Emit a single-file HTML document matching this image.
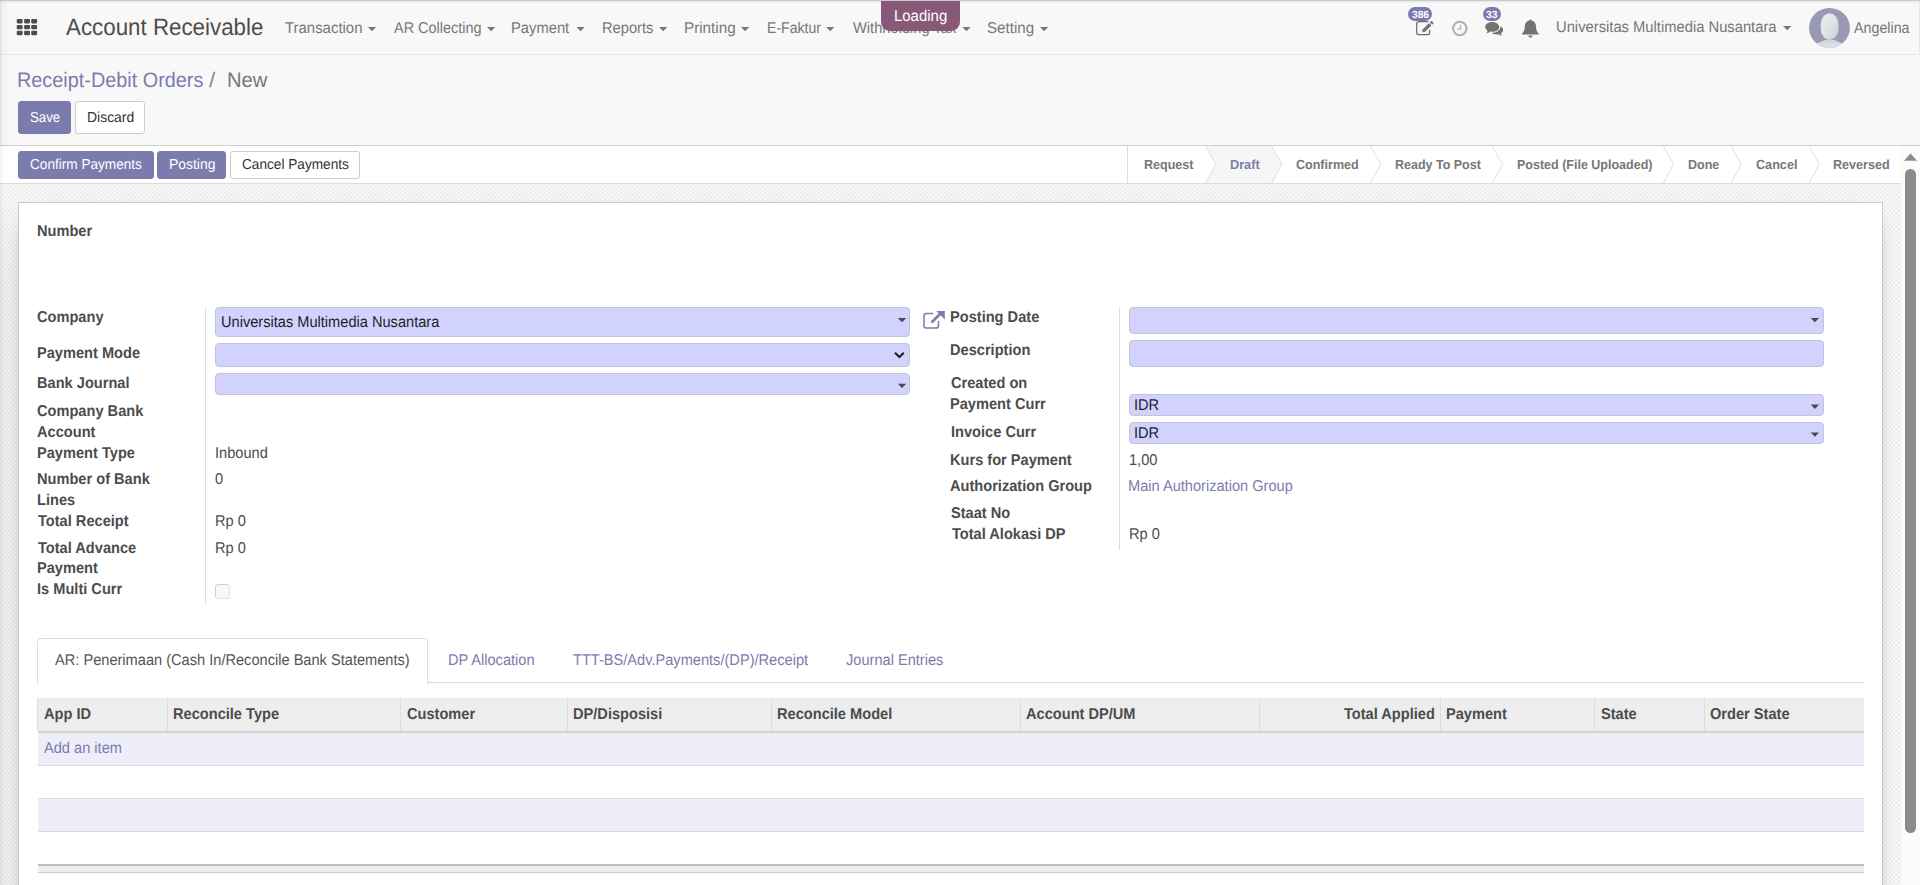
<!DOCTYPE html>
<html lang="en">
<head>
<meta charset="utf-8">
<title>New - Receipt-Debit Orders - Account Receivable</title>
<style>
html,body{margin:0;padding:0}
body{width:1920px;height:885px;overflow:hidden;position:relative;background:#f8f8f8;font-family:"Liberation Sans",sans-serif;font-size:14.625px;color:#4c4c4c}
body *{position:absolute;box-sizing:border-box;margin:0;padding:0}
.t{white-space:nowrap;line-height:1;text-rendering:geometricPrecision;transform-origin:0 50%;display:block;text-decoration:none;font-style:normal}
.btn{border-radius:3px;border:1px solid transparent}
.btn-p{background:#7c7bad;border-color:#7c7bad}
.btn-d{background:#fff;border-color:#ccc}
.inp{background:#d2d2ff;border:1px solid #c4c4d4;border-radius:4px}
svg{overflow:visible}
</style>
</head>
<body>
<nav>
<div style="left:0px;top:0px;width:1920px;height:55px;background:#f8f8f8;border-bottom:1px solid #e7e7e7;border-right:1px solid #e7e7e7"></div>
<div style="left:0px;top:1px;width:1920px;height:2px;background:linear-gradient(#e6e7e7,rgba(248,248,248,0))"></div>
<svg style="left:0;top:0" width="60" height="54"><rect x="16.7" y="19.0" width="5.9" height="4.4" rx="1.1" fill="#4c4c4c"/><rect x="16.7" y="24.9" width="5.9" height="4.4" rx="1.1" fill="#4c4c4c"/><rect x="16.7" y="30.8" width="5.9" height="4.4" rx="1.1" fill="#4c4c4c"/><rect x="24.1" y="19.0" width="5.9" height="4.4" rx="1.1" fill="#4c4c4c"/><rect x="24.1" y="24.9" width="5.9" height="4.4" rx="1.1" fill="#4c4c4c"/><rect x="24.1" y="30.8" width="5.9" height="4.4" rx="1.1" fill="#4c4c4c"/><rect x="31.2" y="19.0" width="5.9" height="4.4" rx="1.1" fill="#4c4c4c"/><rect x="31.2" y="24.9" width="5.9" height="4.4" rx="1.1" fill="#4c4c4c"/><rect x="31.2" y="30.8" width="5.9" height="4.4" rx="1.1" fill="#4c4c4c"/></svg>
<a class="t" style="left:65.86px;top:17px;font-size:23.625px;color:#4c4c4c;transform:scaleX(0.9457);">Account Receivable</a>
<a class="t" style="left:284.76px;top:21px;font-size:15.649px;color:#777;transform:scaleX(0.9556);">Transaction</a>
<a class="t" style="left:393.87px;top:21px;font-size:15.649px;color:#777;transform:scaleX(0.9250);">AR Collecting</a>
<a class="t" style="left:511.49px;top:21px;font-size:15.649px;color:#777;transform:scaleX(0.9442);">Payment</a>
<a class="t" style="left:601.99px;top:21px;font-size:15.649px;color:#777;transform:scaleX(0.9402);">Reports</a>
<a class="t" style="left:684.35px;top:21px;font-size:15.649px;color:#777;transform:scaleX(0.9746);">Printing</a>
<a class="t" style="left:766.55px;top:21px;font-size:15.649px;color:#777;transform:scaleX(0.8996);">E-Faktur</a>
<a class="t" style="left:852.74px;top:21px;font-size:15.649px;color:#777;transform:scaleX(0.9383);">Withholding Tax</a>
<a class="t" style="left:987.31px;top:21px;font-size:15.649px;color:#777;transform:scaleX(0.9696);">Setting</a>
<a class="t" style="left:1556.46px;top:20px;font-size:15.649px;color:#777;transform:scaleX(0.9441);">Universitas Multimedia Nusantara</a>
<svg style="left:0;top:0" width="1920" height="54"><path d="M367.9 27h8.2l-4.1 4.3z" fill="#777"/><path d="M487 27h8.2l-4.1 4.3z" fill="#777"/><path d="M576.5 27h8.2l-4.1 4.3z" fill="#777"/><path d="M659.1 27h8.2l-4.1 4.3z" fill="#777"/><path d="M741 27h8.2l-4.1 4.3z" fill="#777"/><path d="M826.1 27h8.2l-4.1 4.3z" fill="#777"/><path d="M962.4 27h8.2l-4.1 4.3z" fill="#777"/><path d="M1040 27h8.2l-4.1 4.3z" fill="#777"/><path d="M1783.1 26h8.2l-4.1 4.3z" fill="#777"/></svg>
<a class="t" style="left:1853.97px;top:21px;font-size:15.649px;color:#777;transform:scaleX(0.9131);">Angelina</a>
<svg style="left:1808px;top:7px" width="42" height="42" viewBox="0 0 42 42">
<defs><clipPath id="av"><ellipse cx="21.500" cy="20.900" rx="20.400" ry="20"/></clipPath>
<linearGradient id="hg" x1="0" y1="0" x2="1" y2="1"><stop offset="0" stop-color="#eceef0"/><stop offset=".55" stop-color="#dfe2e5"/><stop offset="1" stop-color="#c9cdd2"/></linearGradient>
<linearGradient id="sg" x1="0" y1="0" x2="0" y2="1"><stop offset="0" stop-color="#cfd3d7"/><stop offset=".35" stop-color="#dcdfe2"/><stop offset="1" stop-color="#e6e8ea"/></linearGradient></defs>
<ellipse cx="21.500" cy="20.900" rx="20.400" ry="20" fill="#9a99b4"/>
<g clip-path="url(#av)">
<path d="M5 38c3.500-1.900 8.500-3 11.500-5h10c3 2 8 3.100 11.500 5v8h-33z" fill="url(#sg)"/>
<rect x="12.700" y="6.400" width="17.800" height="26.300" rx="8.600" ry="11.500" fill="url(#hg)"/>
</g></svg>
<svg style="left:0;top:0" width="1920" height="54">
<path d="M1429.700 30.400v2a2.300 2.300 0 0 1-2.300 2.300h-8.400a2.300 2.300 0 0 1-2.300-2.300v-8.400a2.300 2.300 0 0 1 2.300-2.300h8.800" fill="none" stroke="#6d6d6d" stroke-width="1.250" stroke-linecap="round"/>
<path d="M1422.200 32.300l.500-2.900 6.300-6.300 2.400 2.400-6.300 6.300z" fill="#727272"/>
<path d="M1429.800 22.300l1.100-1.100a.800.800 0 0 1 1.100 0l1.300 1.300a.800.800 0 0 1 0 1.100l-1.100 1.100z" fill="#727272"/>
<circle cx="1459.800" cy="28.500" r="6.700" fill="none" stroke="#b0b0b0" stroke-width="2.100"/>
<path d="M1460.500 24.800v4.300h-3.400" fill="none" stroke="#b4b4b4" stroke-width="1.300"/>
<path d="M1492.200 22c3.900 0 7 2.200 7 4.900s-3.100 4.900-7 4.900c-.7 0-1.300-.1-1.900-.2-1.100 1-2.600 1.600-4.200 1.700 .8-.7 1.300-1.600 1.500-2.600-1.500-.9-2.400-2.300-2.400-3.800 0-2.700 3.100-4.900 7-4.900z" fill="#737373"/>
<path d="M1500.400 26.300c1.700 .8 2.700 2.200 2.700 3.700 0 1.400-.8 2.600-2.200 3.500 .2 .8 .6 1.500 1.300 2.100-1.500-.1-2.800-.6-3.800-1.400-.6 .1-1.100 .2-1.800 .2-2 0-3.900-.6-5.100-1.700 .3 0 .5 .000 .8 .000 4.500 0 8.200-2.700 8.200-6 0-.200 0-.300-.100-.400z" fill="#737373"/>
<path d="M1530.400 19.400c.7 0 1.200 .5 1.200 1.100 2.700 .6 4.400 2.900 4.400 5.700 0 4.300 1.300 6 2.800 7.300v1h-16.800v-1c1.500-1.300 2.800-3 2.800-7.300 0-2.800 1.700-5.100 4.400-5.700 0-.6 .5-1.100 1.200-1.100zM1528.300 35.600h4.200a2.100 2.100 0 0 1-4.200 0z" fill="#737373"/>
</svg>
<div style="left:1408px;top:7px;width:24px;height:14px;background:#7c7bad;border-radius:7px"></div>
<span class="t" style="left:1411.57px;top:11px;font-size:10.486px;color:#fff;font-weight:bold;transform:scaleX(0.9735);">386</span>
<div style="left:1483px;top:7px;width:18px;height:14px;background:#7c7bad;border-radius:7px"></div>
<span class="t" style="left:1486.36px;top:11px;font-size:10.486px;color:#fff;font-weight:bold;transform:scaleX(0.9796);">33</span>
</nav>
<header>
<div style="left:0px;top:55px;width:1920px;height:90px;background:#f8f8f8"></div>
<div style="left:0px;top:145px;width:1920px;height:1px;background:#cfcfcf"></div>
<a class="t" style="left:17.07px;top:71px;font-size:20.959px;color:#7c7bad;transform:scaleX(0.9476);">Receipt-Debit Orders</a>
<span class="t" style="left:209.30px;top:71px;font-size:20.959px;color:#8a8a8a;transform:scaleX(1.0830);">/</span>
<span class="t" style="left:227.14px;top:71px;font-size:20.959px;color:#777;transform:scaleX(0.9648);">New</span>
<button class="btn btn-p" style="left:18px;top:101px;width:53px;height:33px;"></button>
<span class="t" style="left:29.80px;top:111px;font-size:14.445px;color:#fff;transform:scaleX(0.9174);">Save</span>
<button class="btn btn-d" style="left:75px;top:101px;width:70px;height:33px;"></button>
<span class="t" style="left:86.66px;top:111px;font-size:14.445px;color:#333;transform:scaleX(0.9654);">Discard</span>
</header>
<div style="left:881px;top:1px;width:79px;height:30px;background:#875878;border-radius:0 0 9px 9px"></div>
<span class="t" style="left:893.67px;top:9px;font-size:15.649px;color:#fff;transform:scaleX(0.9565);">Loading</span>
<section>
<div style="left:0px;top:146px;width:1901px;height:38px;background:#fff;border-bottom:1px solid #dcdcdc"></div>
<button class="btn btn-p" style="left:18px;top:151px;width:136px;height:28px;"></button>
<span class="t" style="left:29.91px;top:158px;font-size:14.445px;color:#fff;transform:scaleX(0.9422);">Confirm Payments</span>
<button class="btn btn-p" style="left:157px;top:151px;width:69px;height:28px;"></button>
<span class="t" style="left:168.86px;top:158px;font-size:14.445px;color:#fff;transform:scaleX(0.9644);">Posting</span>
<button class="btn btn-d" style="left:230px;top:151px;width:130px;height:28px;"></button>
<span class="t" style="left:241.61px;top:158px;font-size:14.445px;color:#333;transform:scaleX(0.9447);">Cancel Payments</span>
<svg style="left:0;top:0" width="1920" height="200"><path d="M1205.5 146H1271.6L1281.9 164.500 1271.600 183H1205.500L1215.800 164.500z" fill="#f6f6f6"/><path d="M1127.500 146v37" stroke="#ddd" fill="none"/><path d="M1205.5 146l10.300 18.500-10.300 18.500" stroke="#e0e0e0" stroke-width="1" fill="none"/><path d="M1271.6 146l10.300 18.500-10.300 18.500" stroke="#e0e0e0" stroke-width="1" fill="none"/><path d="M1370.5 146l10.300 18.500-10.300 18.500" stroke="#e0e0e0" stroke-width="1" fill="none"/><path d="M1492.2 146l10.300 18.500-10.300 18.500" stroke="#e0e0e0" stroke-width="1" fill="none"/><path d="M1663.3 146l10.300 18.500-10.300 18.500" stroke="#e0e0e0" stroke-width="1" fill="none"/><path d="M1731 146l10.300 18.500-10.300 18.500" stroke="#e0e0e0" stroke-width="1" fill="none"/><path d="M1809 146l10.300 18.500-10.300 18.500" stroke="#e0e0e0" stroke-width="1" fill="none"/></svg>
<span class="t" style="left:1144.36px;top:158px;font-size:13.241px;color:#777;font-weight:bold;transform:scaleX(0.9479);">Request</span>
<span class="t" style="left:1230.45px;top:158px;font-size:13.241px;color:#7c7bad;font-weight:bold;transform:scaleX(0.9586);">Draft</span>
<span class="t" style="left:1296.29px;top:158px;font-size:13.241px;color:#777;font-weight:bold;transform:scaleX(0.9466);">Confirmed</span>
<span class="t" style="left:1394.86px;top:158px;font-size:13.241px;color:#777;font-weight:bold;transform:scaleX(0.9433);">Ready To Post</span>
<span class="t" style="left:1516.86px;top:158px;font-size:13.241px;color:#777;font-weight:bold;transform:scaleX(0.9448);">Posted (File Uploaded)</span>
<span class="t" style="left:1688.16px;top:158px;font-size:13.241px;color:#777;font-weight:bold;transform:scaleX(0.9450);">Done</span>
<span class="t" style="left:1756.18px;top:158px;font-size:13.241px;color:#777;font-weight:bold;transform:scaleX(0.9542);">Cancel</span>
<span class="t" style="left:1833.46px;top:158px;font-size:13.241px;color:#777;font-weight:bold;transform:scaleX(0.9510);">Reversed</span>
</section>
<main>
<svg style="left:0;top:184px" width="1901" height="701"><defs><pattern id="chk" width="4.5" height="4.5" patternUnits="userSpaceOnUse"><rect width="4.5" height="4.5" fill="#fdfdfd"/><path d="M1.125 1.125h2.250v2.250h-2.250zM3.375 3.375h1.125v1.125h-1.125zM0 3.375h1.125v1.125h-1.125zM3.375 0h1.125v1.125h-1.125zM0 0h1.125v1.125h-1.125z" fill="#e9e9e9"/></pattern></defs><rect width="1901" height="19" fill="url(#chk)"/><rect y="19" width="19" height="682" fill="url(#chk)"/><rect x="1882" y="19" width="19" height="682" fill="url(#chk)"/></svg>
<div style="left:0;top:184px;width:1901px;height:701px;overflow:hidden"><div style="left:18px;top:18px;width:1865px;height:1100px;background:#fff;border:1px solid #c8c8d3;box-shadow:0 5.6px 22.5px -17px #000"></div></div>
<label class="t" style="left:36.52px;top:224px;font-size:15.649px;color:#4c4c4c;font-weight:bold;transform:scaleX(0.9346);">Number</label>
<label class="t" style="left:36.90px;top:310px;font-size:15.649px;color:#4c4c4c;font-weight:bold;transform:scaleX(0.9346);">Company</label>
<label class="t" style="left:36.52px;top:346px;font-size:15.649px;color:#4c4c4c;font-weight:bold;transform:scaleX(0.9346);">Payment Mode</label>
<label class="t" style="left:36.52px;top:376px;font-size:15.649px;color:#4c4c4c;font-weight:bold;transform:scaleX(0.9346);">Bank Journal</label>
<label class="t" style="left:36.90px;top:404px;font-size:15.649px;color:#4c4c4c;font-weight:bold;transform:scaleX(0.9346);">Company Bank</label>
<label class="t" style="left:37.14px;top:425px;font-size:15.649px;color:#4c4c4c;font-weight:bold;transform:scaleX(0.9346);">Account</label>
<label class="t" style="left:36.52px;top:446px;font-size:15.649px;color:#4c4c4c;font-weight:bold;transform:scaleX(0.9346);">Payment Type</label>
<label class="t" style="left:36.52px;top:472px;font-size:15.649px;color:#4c4c4c;font-weight:bold;transform:scaleX(0.9346);">Number of Bank</label>
<label class="t" style="left:36.52px;top:493px;font-size:15.649px;color:#4c4c4c;font-weight:bold;transform:scaleX(0.9346);">Lines</label>
<label class="t" style="left:38.34px;top:514px;font-size:15.649px;color:#4c4c4c;font-weight:bold;transform:scaleX(0.9346);">Total Receipt</label>
<label class="t" style="left:38.34px;top:541px;font-size:15.649px;color:#4c4c4c;font-weight:bold;transform:scaleX(0.9346);">Total Advance</label>
<label class="t" style="left:36.52px;top:561px;font-size:15.649px;color:#4c4c4c;font-weight:bold;transform:scaleX(0.9346);">Payment</label>
<label class="t" style="left:36.82px;top:582px;font-size:15.649px;color:#4c4c4c;font-weight:bold;transform:scaleX(0.9346);">Is Multi Curr</label>
<label class="t" style="left:950.12px;top:310px;font-size:15.649px;color:#4c4c4c;font-weight:bold;transform:scaleX(0.9346);">Posting Date</label>
<label class="t" style="left:950.12px;top:343px;font-size:15.649px;color:#4c4c4c;font-weight:bold;transform:scaleX(0.9346);">Description</label>
<label class="t" style="left:950.50px;top:376px;font-size:15.649px;color:#4c4c4c;font-weight:bold;transform:scaleX(0.9346);">Created on</label>
<label class="t" style="left:950.12px;top:397px;font-size:15.649px;color:#4c4c4c;font-weight:bold;transform:scaleX(0.9346);">Payment Curr</label>
<label class="t" style="left:950.52px;top:425px;font-size:15.649px;color:#4c4c4c;font-weight:bold;transform:scaleX(0.9346);">Invoice Curr</label>
<label class="t" style="left:950.12px;top:453px;font-size:15.649px;color:#4c4c4c;font-weight:bold;transform:scaleX(0.9346);">Kurs for Payment</label>
<label class="t" style="left:950.24px;top:479px;font-size:15.649px;color:#4c4c4c;font-weight:bold;transform:scaleX(0.9346);">Authorization Group</label>
<label class="t" style="left:951.38px;top:506px;font-size:15.649px;color:#4c4c4c;font-weight:bold;transform:scaleX(0.9346);">Staat No</label>
<label class="t" style="left:951.64px;top:527px;font-size:15.649px;color:#4c4c4c;font-weight:bold;transform:scaleX(0.9346);">Total Alokasi DP</label>
<div style="left:205px;top:307px;width:1px;height:297px;background:#ddd"></div>
<div style="left:1119px;top:307px;width:1px;height:243px;background:#ddd"></div>
<div class="inp" style="left:215px;top:307px;width:695px;height:30px;"></div>
<div class="inp" style="left:215px;top:343px;width:695px;height:24px;"></div>
<div class="inp" style="left:215px;top:373px;width:695px;height:22px;"></div>
<div class="inp" style="left:1129px;top:307px;width:695px;height:27px;"></div>
<div class="inp" style="left:1129px;top:340px;width:695px;height:27px;"></div>
<div class="inp" style="left:1129px;top:394px;width:695px;height:22px;"></div>
<div class="inp" style="left:1129px;top:422px;width:695px;height:22px;"></div>
<span class="t" style="left:220.87px;top:315px;font-size:15.649px;color:#1f1f1f;transform:scaleX(0.9346);">Universitas Multimedia Nusantara</span>
<span class="t" style="left:1133.55px;top:398px;font-size:15.649px;color:#1f1f1f;transform:scaleX(0.9346);">IDR</span>
<span class="t" style="left:1133.55px;top:426px;font-size:15.649px;color:#1f1f1f;transform:scaleX(0.9346);">IDR</span>
<svg style="left:0;top:0" width="1920" height="885"><path d="M897.8 318h8.400l-4.200 4.300z" fill="#4a4a4a"/><path d="M897.8 383.7h8.400l-4.200 4.300z" fill="#4a4a4a"/><path d="M1810.7 317.9h8.400l-4.200 4.300z" fill="#4a4a4a"/><path d="M1810.7 404.6h8.400l-4.200 4.300z" fill="#4a4a4a"/><path d="M1810.7 432.5h8.400l-4.200 4.300z" fill="#4a4a4a"/><path d="M895 352.700l4.400 4.300 4.400-4.300" stroke="#1c1c1c" stroke-width="2" fill="none"/><g fill="none" stroke="#7c7bad" stroke-width="1.500" stroke-linecap="round" stroke-linejoin="round">
<path d="M938.500 321.500v4a2.600 2.600 0 0 1-2.600 2.600h-9.300a2.600 2.600 0 0 1-2.600-2.600v-9.300a2.600 2.600 0 0 1 2.600-2.600h6"/>
</g><path d="M931.500 322.500l8.500-8.500" stroke="#7c7bad" stroke-width="2.600" fill="none"/>
<path d="M936.300 311h8.500v8.500z" fill="#7c7bad"/></svg>
<span class="t" style="left:214.75px;top:446px;font-size:15.649px;color:#4c4c4c;transform:scaleX(0.9346);">Inbound</span>
<span class="t" style="left:215.33px;top:472px;font-size:15.649px;color:#4c4c4c;transform:scaleX(0.9346);">0</span>
<span class="t" style="left:215.00px;top:514px;font-size:15.649px;color:#4c4c4c;transform:scaleX(0.9346);">Rp 0</span>
<span class="t" style="left:215.00px;top:541px;font-size:15.649px;color:#4c4c4c;transform:scaleX(0.9346);">Rp 0</span>
<span class="t" style="left:1129.29px;top:453px;font-size:15.649px;color:#4c4c4c;transform:scaleX(0.9346);">1,00</span>
<a class="t" style="left:1128.40px;top:479px;font-size:15.649px;color:#7c7bad;transform:scaleX(0.9346);">Main Authorization Group</a>
<span class="t" style="left:1129.00px;top:527px;font-size:15.649px;color:#4c4c4c;transform:scaleX(0.9346);">Rp 0</span>
<span style="left:215px;top:584px;width:15px;height:15px;background:#f8f8f8;border:1px solid #d2d2d2;border-right-color:#e0e0e0;border-bottom-color:#e0e0e0;border-radius:3.5px"></span>
<div style="left:37px;top:682px;width:1827px;height:1px;background:#ddd"></div>
<div style="left:37px;top:638px;width:391px;height:46px;background:#fff;border:1px solid #ddd;border-bottom:0;border-radius:4.5px 4.5px 0 0"></div>
<a class="t" style="left:55.17px;top:653px;font-size:15.649px;color:#555;transform:scaleX(0.9346);">AR: Penerimaan (Cash In/Reconcile Bank Statements)</a>
<a class="t" style="left:448.10px;top:653px;font-size:15.649px;color:#7c7bad;transform:scaleX(0.9346);">DP Allocation</a>
<a class="t" style="left:572.97px;top:653px;font-size:15.649px;color:#7c7bad;transform:scaleX(0.9346);">TTT-BS/Adv.Payments/(DP)/Receipt</a>
<a class="t" style="left:846.37px;top:653px;font-size:15.649px;color:#7c7bad;transform:scaleX(0.9346);">Journal Entries</a>
<div style="left:37px;top:698px;width:1827px;height:33px;background:#ededed;border-left:1px solid #ddd"></div>
<div style="left:38px;top:731px;width:1826px;height:2px;background:#d2d2d2"></div>
<div style="left:167px;top:698px;width:1px;height:33px;background:#ddd"></div>
<div style="left:400px;top:698px;width:1px;height:33px;background:#ddd"></div>
<div style="left:567px;top:698px;width:1px;height:33px;background:#ddd"></div>
<div style="left:771px;top:698px;width:1px;height:33px;background:#ddd"></div>
<div style="left:1020px;top:698px;width:1px;height:33px;background:#ddd"></div>
<div style="left:1259px;top:698px;width:1px;height:33px;background:#ddd"></div>
<div style="left:1440px;top:698px;width:1px;height:33px;background:#ddd"></div>
<div style="left:1594px;top:698px;width:1px;height:33px;background:#ddd"></div>
<div style="left:1704px;top:698px;width:1px;height:33px;background:#ddd"></div>
<span class="t" style="left:43.84px;top:707px;font-size:15.649px;color:#4c4c4c;font-weight:bold;transform:scaleX(0.9346);">App ID</span>
<span class="t" style="left:173.42px;top:707px;font-size:15.649px;color:#4c4c4c;font-weight:bold;transform:scaleX(0.9346);">Reconcile Type</span>
<span class="t" style="left:406.60px;top:707px;font-size:15.649px;color:#4c4c4c;font-weight:bold;transform:scaleX(0.9346);">Customer</span>
<span class="t" style="left:573.22px;top:707px;font-size:15.649px;color:#4c4c4c;font-weight:bold;transform:scaleX(0.9346);">DP/Disposisi</span>
<span class="t" style="left:776.92px;top:707px;font-size:15.649px;color:#4c4c4c;font-weight:bold;transform:scaleX(0.9346);">Reconcile Model</span>
<span class="t" style="left:1026.34px;top:707px;font-size:15.649px;color:#4c4c4c;font-weight:bold;transform:scaleX(0.9346);">Account DP/UM</span>
<span class="t" style="left:1445.52px;top:707px;font-size:15.649px;color:#4c4c4c;font-weight:bold;transform:scaleX(0.9346);">Payment</span>
<span class="t" style="left:1600.98px;top:707px;font-size:15.649px;color:#4c4c4c;font-weight:bold;transform:scaleX(0.9346);">State</span>
<span class="t" style="left:1710.30px;top:707px;font-size:15.649px;color:#4c4c4c;font-weight:bold;transform:scaleX(0.9346);">Order State</span>
<span class="t" style="left:1343.81px;top:707px;font-size:15.649px;color:#4c4c4c;font-weight:bold;transform:scaleX(0.9346);">Total Applied</span>
<div style="left:38px;top:733px;width:1826px;height:32px;background:#eeeef8"></div>
<div style="left:38px;top:765px;width:1826px;height:1px;background:#d9d9d9"></div>
<div style="left:38px;top:798px;width:1826px;height:1px;background:#d9d9d9"></div>
<div style="left:38px;top:799px;width:1826px;height:32px;background:#eeeef8"></div>
<div style="left:38px;top:831px;width:1826px;height:1px;background:#d9d9d9"></div>
<div style="left:38px;top:864px;width:1826px;height:2px;background:#bdbdbd"></div>
<div style="left:38px;top:866px;width:1826px;height:6px;background:#eee"></div>
<div style="left:38px;top:872px;width:1826px;height:1px;background:#ccc"></div>
<a class="t" style="left:43.77px;top:741px;font-size:15.649px;color:#7c7bad;transform:scaleX(0.9346);">Add an item</a>
</main>
<div style="left:1901px;top:146px;width:19px;height:739px;background:#fbfbfb"></div>
<svg style="left:0;top:0" width="1920" height="200"><path d="M1904 160.800l6.500-7.200 6.500 7.200z" fill="#8b8b8b"/></svg>
<div style="left:1905px;top:169px;width:11px;height:664px;background:#8b8b8b;border-radius:5.5px"></div>
<div style="left:0px;top:184px;width:18px;height:701px;background:linear-gradient(rgba(0,0,0,0) 20px,rgba(0,0,0,.03) 100px)"></div>
<div style="left:0px;top:0px;width:1920px;height:1px;background:#c9cbca"></div>
<div style="left:0px;top:0px;width:12px;height:146px;background:linear-gradient(90deg,rgba(0,0,0,.13) 0,rgba(0,0,0,.045) 1.500px,rgba(0,0,0,.02) 5px,rgba(0,0,0,0) 12px)"></div>
<div style="left:0px;top:146px;width:6px;height:739px;background:linear-gradient(90deg,rgba(0,0,0,.06) 0,rgba(0,0,0,.02) 2px,rgba(0,0,0,0) 6px)"></div>
</body>
</html>
